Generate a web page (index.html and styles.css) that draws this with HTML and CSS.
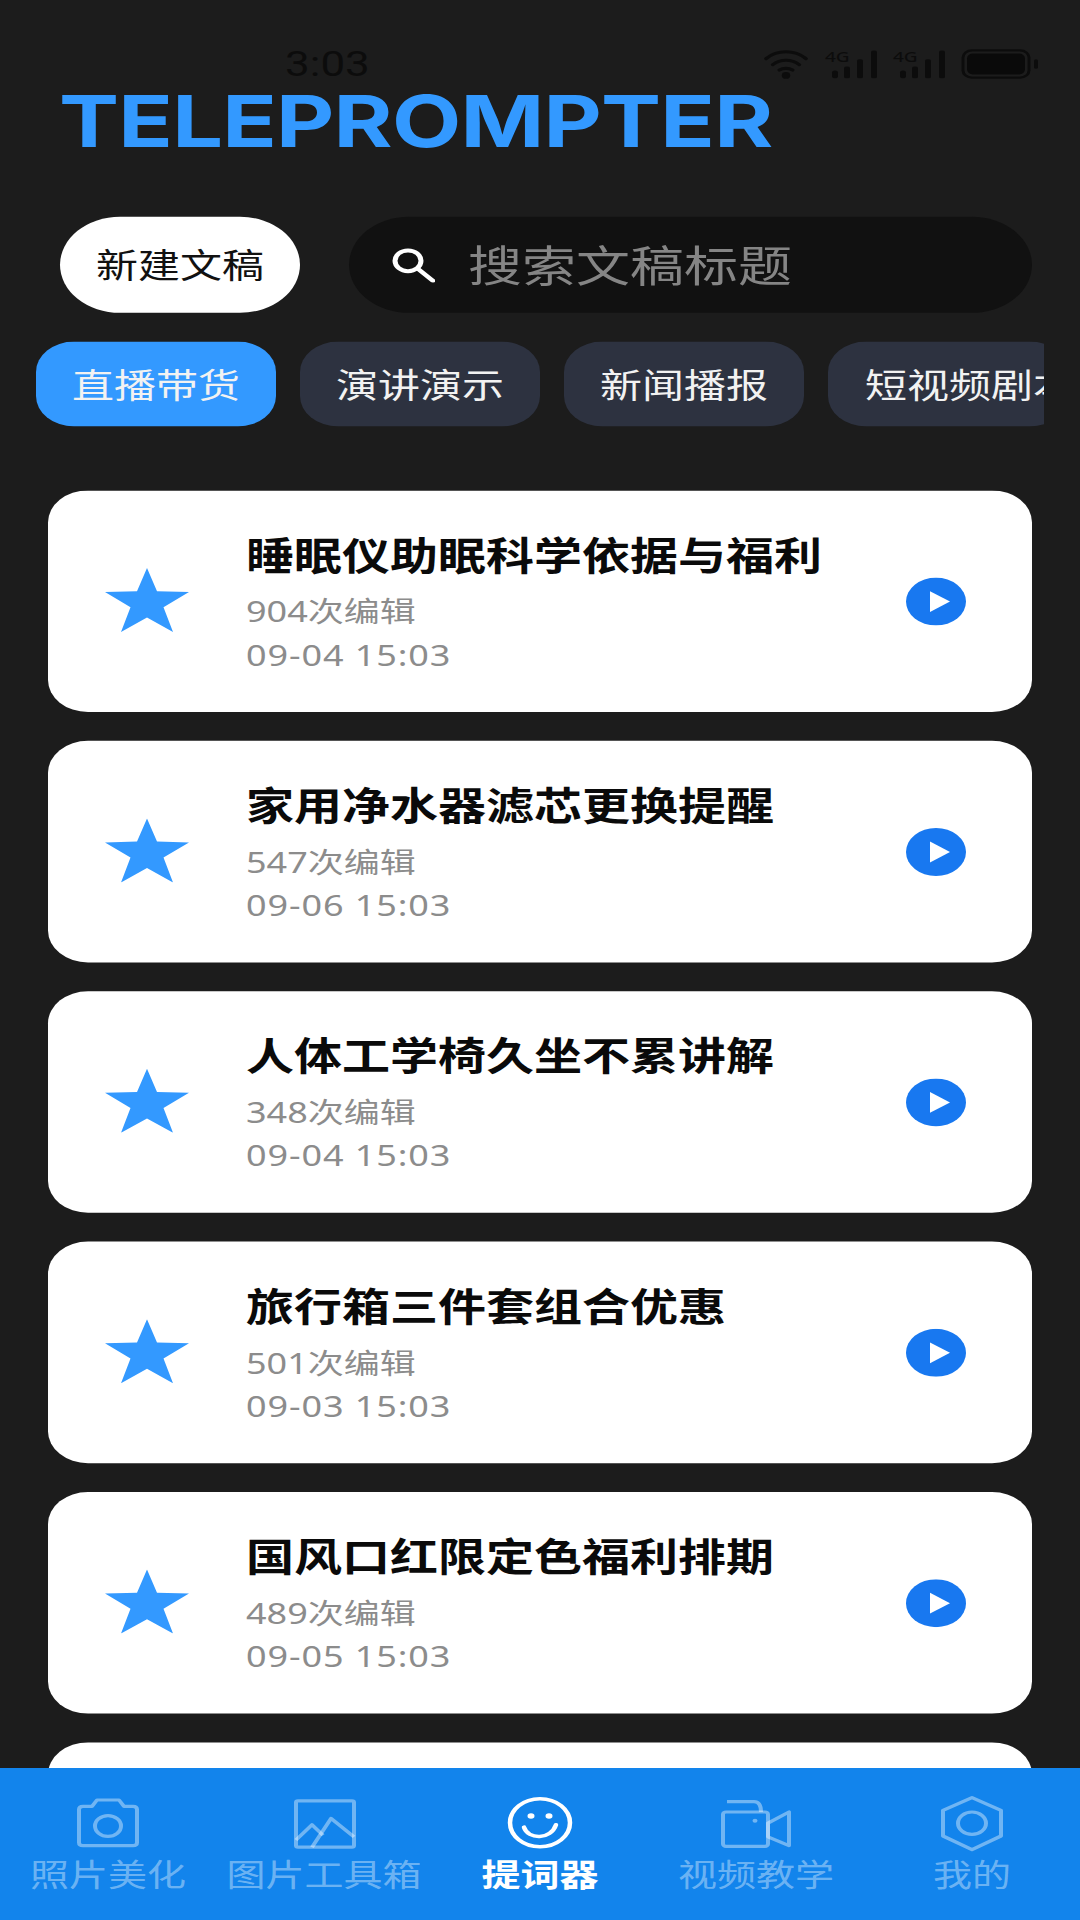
FILE: index.html
```html
<!DOCTYPE html>
<html lang="zh">
<head>
<meta charset="utf-8">
<title>Teleprompter</title>
<link rel="stylesheet" href="styles.css">
</head>
<body>
<svg class="defs" width="0" height="0" aria-hidden="true">
  <symbol id="star" viewBox="0 0 84 80"><path d="M42 0 52 29 84 30 58.500 49 68 80 42 62 16 80 25.500 49 0 30 32 29Z" fill="#3399ff"/></symbol>
  <symbol id="play" viewBox="0 0 60 60"><circle cx="30" cy="30" r="30" fill="#1878f0"/><path d="M24 17 44 30 24 43Z" fill="#fff"/></symbol>
  <symbol id="bars" viewBox="0 0 52 36">
    <rect x="7" y="26" width="6" height="10" rx="3"/><rect x="19" y="21" width="6" height="15" rx="2"/><rect x="32" y="12" width="6" height="24" rx="2"/><rect x="46" y="1" width="6" height="35" rx="2"/>
  </symbol>
</svg>
<div class="screen">
  <header class="status">
    <span class="time">3:03</span>
    <div class="status-icons">
      <svg class="wifi" viewBox="0 0 46 40"><g fill="none" stroke="#0c0c0c" stroke-width="4" stroke-linecap="round"><path d="M2 13C14 1 32 1 44 13"/><path d="M9 21C17 13 29 13 37 21"/><path d="M16 28C20 25 26 25 30 28"/></g><circle cx="23" cy="35" r="4.500" fill="#0c0c0c"/></svg>
      <span class="sig"><span class="sig-text">4G</span><svg class="bars"><use href="#bars"/></svg></span>
      <span class="sig"><span class="sig-text">4G</span><svg class="bars"><use href="#bars"/></svg></span>
      <svg class="batt" viewBox="0 0 78 38"><rect x="2" y="2" width="66" height="34" rx="9" fill="none" stroke="#0c0c0c" stroke-width="3"/><rect x="6" y="6" width="58" height="26" rx="6" fill="#0a0a0a"/><rect x="73" y="13" width="4" height="12" rx="2" fill="#0c0c0c"/></svg>
    </div>
  </header>
  <h1 class="brand">TELEPROMPTER</h1>
  <div class="tools">
    <button class="new-btn">新建文稿</button>
    <div class="search">
      <svg class="search-icon" viewBox="0 0 44 44"><circle cx="17" cy="17" r="13" fill="none" stroke="#fff" stroke-width="5"/><path d="M27 27 42 42" stroke="#fff" stroke-width="5" stroke-linecap="round"/></svg>
      <span class="search-text">搜索文稿标题</span>
    </div>
  </div>
  <div class="chips">
    <span class="chip chip-on">直播带货</span>
    <span class="chip">演讲演示</span>
    <span class="chip">新闻播报</span>
    <span class="chip">短视频剧本</span>
  </div>
  <main class="list">
    <article class="card">
      <svg class="star"><use href="#star"/></svg>
      <div class="info"><h2 class="name">睡眠仪助眠科学依据与福利</h2><p class="meta">904次编辑</p><p class="meta date">09-04 15:03</p></div>
      <svg class="play"><use href="#play"/></svg>
    </article>
    <article class="card">
      <svg class="star"><use href="#star"/></svg>
      <div class="info"><h2 class="name">家用净水器滤芯更换提醒</h2><p class="meta">547次编辑</p><p class="meta date">09-06 15:03</p></div>
      <svg class="play"><use href="#play"/></svg>
    </article>
    <article class="card">
      <svg class="star"><use href="#star"/></svg>
      <div class="info"><h2 class="name">人体工学椅久坐不累讲解</h2><p class="meta">348次编辑</p><p class="meta date">09-04 15:03</p></div>
      <svg class="play"><use href="#play"/></svg>
    </article>
    <article class="card">
      <svg class="star"><use href="#star"/></svg>
      <div class="info"><h2 class="name">旅行箱三件套组合优惠</h2><p class="meta">501次编辑</p><p class="meta date">09-03 15:03</p></div>
      <svg class="play"><use href="#play"/></svg>
    </article>
    <article class="card">
      <svg class="star"><use href="#star"/></svg>
      <div class="info"><h2 class="name">国风口红限定色福利排期</h2><p class="meta">489次编辑</p><p class="meta date">09-05 15:03</p></div>
      <svg class="play"><use href="#play"/></svg>
    </article>
    <article class="card"></article>
  </main>
  <nav class="nav">
    <a class="tab">
      <svg class="tab-icon" viewBox="0 0 72 72"><g fill="none" stroke="currentColor" stroke-width="4" stroke-linejoin="round"><path d="M7 19Q7 15 11 15H20L25 7H47L52 15H61Q65 15 65 19V60Q65 64 61 64H11Q7 64 7 60Z"/><ellipse cx="36" cy="39.500" rx="13" ry="13"/></g></svg>
      <span>照片美化</span>
    </a>
    <a class="tab">
      <svg class="tab-icon" viewBox="0 0 72 72"><g fill="none" stroke="currentColor" stroke-width="4" stroke-linejoin="round"><rect x="8" y="8" width="58" height="58" rx="2"/><path d="M8 57 24 38 35 51"/><path d="M24 66 43 30 66 53"/></g></svg>
      <span>图片工具箱</span>
    </a>
    <a class="tab tab-on">
      <svg class="tab-icon" viewBox="0 0 72 72"><g fill="none" stroke="currentColor" stroke-width="4.500" stroke-linecap="round"><circle cx="36" cy="35.500" r="30"/><path d="M20 41C24 57 47 57 52 38"/></g><circle cx="27" cy="27" r="3.500" fill="currentColor"/><circle cx="45" cy="27" r="3.500" fill="currentColor"/></svg>
      <span>提词器</span>
    </a>
    <a class="tab">
      <svg class="tab-icon" viewBox="0 0 72 72"><g fill="none" stroke="currentColor" stroke-width="4" stroke-linejoin="round"><rect x="3" y="22" width="45" height="43" rx="3"/><path d="M7 9H34C39 9 41 13 41 22"/><path d="M48 36 69 22V64L48 53Z"/></g><circle cx="35" cy="33" r="2.500" fill="currentColor"/></svg>
      <span>视频教学</span>
    </a>
    <a class="tab">
      <svg class="tab-icon" viewBox="0 0 72 72"><g fill="none" stroke="currentColor" stroke-width="4" stroke-linejoin="round"><path d="M36 4 65 20V52L36 69 7 52V20Z"/><circle cx="36" cy="36" r="14"/></g></svg>
      <span>我的</span>
    </a>
  </nav>
</div>
</body>
</html>
```

FILE: styles.css
```css
* { box-sizing: border-box; margin: 0; padding: 0; }
html, body { width: 1080px; height: 1920px; overflow: hidden; background: #1c1c1c; }
.defs { position: absolute; }

/* The capture is a 1080x2400 screen squeezed vertically to 1920. */
.screen {
  width: 1080px;
  height: 2400px;
  margin-bottom: -480px;
  display: flex;
  flex-direction: column;
  background: #1c1c1c;
  transform: scaleY(0.8);
  transform-origin: top left;
  overflow: hidden;
  font-family: "Noto Sans", "Noto Sans CJK SC", sans-serif;
}

.status {
  height: 102px;
  flex: none;
  display: flex;
  align-items: center;
  padding: 58px 41px 0 285px;
}
.time { font-family: Roboto, sans-serif; font-size: 44px; color: #0c0c0c; line-height: 44px; }
.status-icons { margin-left: auto; display: flex; align-items: center; gap: 16px; }
.wifi { width: 46px; height: 38px; }
.sig { position: relative; width: 52px; height: 36px; }
.bars { width: 52px; height: 36px; fill: #0c0c0c; display: block; }
.sig-text {
  position: absolute;
  left: 0;
  top: -1px;
  font-family: "Noto Sans", sans-serif;
  font-size: 19px;
  line-height: 20px;
  font-weight: 500;
  color: #0c0c0c;
}
.batt { width: 78px; height: 38px; }

.brand {
  flex: none;
  height: 100px;
  padding-left: 59px;
  font-family: Inter, sans-serif;
  font-size: 90px;
  line-height: 100px;
  letter-spacing: -0.8px;
  font-weight: 700;
  color: #3399ff;
}

.tools { flex: none; display: flex; gap: 49px; margin-top: 69px; padding: 0 48px 0 60px; height: 120px; }
.new-btn {
  width: 240px;
  border: 0;
  border-radius: 60px;
  background: #fff;
  color: #111;
  font-family: "Noto Sans CJK SC", sans-serif;
  font-size: 42px;
  padding-bottom: 4px;
}
.search {
  flex: 1;
  display: flex;
  align-items: center;
  gap: 33px;
  padding-left: 42px;
  border-radius: 60px;
  background: #111;
}
.search-icon { width: 44px; height: 44px; }
.search-text { font-family: "Noto Sans CJK SC", sans-serif; font-size: 54px; color: #858585; line-height: 116px; height: 120px; }

.chips {
  flex: none;
  width: 1044px;
  display: flex;
  gap: 24px;
  margin-top: 36px;
  padding-left: 36px;
  height: 106px;
  overflow: hidden;
}
.chip {
  flex: none;
  width: 240px;
  display: flex;
  align-items: center;
  justify-content: center;
  padding-bottom: 2px;
  border-radius: 38px;
  background: #2d3240;
  color: #f2f2f2;
  font-family: "Noto Sans CJK SC", sans-serif;
  font-size: 42px;
  white-space: nowrap;
}
.chip:last-child { justify-content: flex-start; padding-left: 37px; }
.chip-on { background: #3399ff; }

.list {
  flex: 1;
  min-height: 0;
  margin-top: 80px;
  padding: 0 48px;
  display: flex;
  flex-direction: column;
  gap: 36px;
  overflow: hidden;
}
.card {
  flex: none;
  height: 277px;
  display: flex;
  align-items: flex-start;
  border-radius: 40px;
  background: #fff;
}
.star { flex: none; width: 84px; height: 80px; margin: 97px 0 0 57px; }
.info { flex: 1; padding: 46px 0 0 57px; }
.name {
  font-family: "Noto Sans CJK SC", sans-serif;
  font-size: 48px;
  line-height: 64px;
  font-weight: 700;
  color: #0a0a0a;
  margin-bottom: 15px;
}
.meta {
  font-family: "Noto Sans", "Noto Sans CJK SC", sans-serif;
  font-size: 36px;
  line-height: 54px;
  color: #8c8c8c;
}
.date { letter-spacing: 0.9px; }
.play { flex: none; width: 60px; height: 60px; margin: 109px 66px 0 0; }

.nav {
  flex: none;
  height: 190px;
  display: grid;
  grid-template-columns: repeat(5, 216px);
  background: #1284ec;
  position: relative;
}
.tab {
  display: flex;
  flex-direction: column;
  align-items: center;
  padding-top: 33px;
  color: rgba(255, 255, 255, 0.4);
  font-family: "Noto Sans CJK SC", sans-serif;
  font-size: 39px;
  line-height: 46px;
  white-space: nowrap;
}
.tab-on { color: #fff; font-weight: 700; }
.tab-icon { width: 72px; height: 72px; margin-bottom: 2px; }
```
